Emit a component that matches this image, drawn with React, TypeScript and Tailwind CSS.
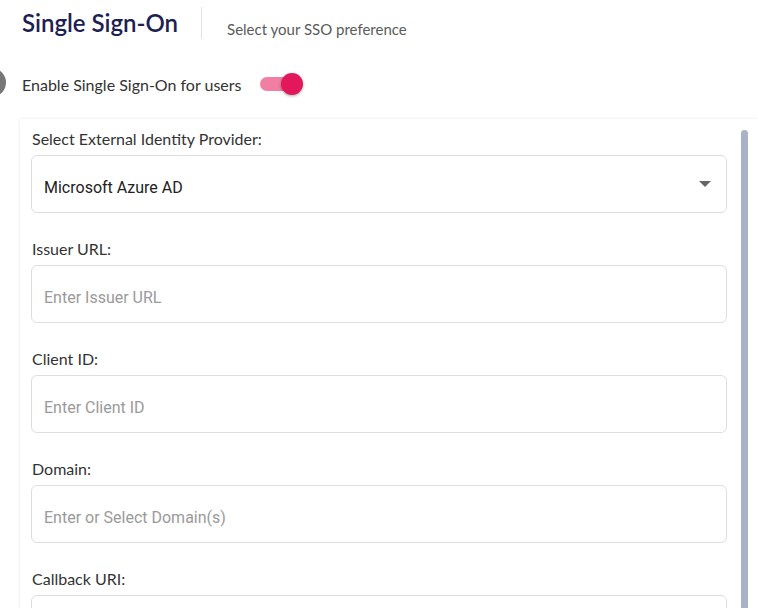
import React from "react";

const Field = ({ label, placeholder, value, select }: { label: string; placeholder?: string; value?: string; select?: boolean }) => (
  <div className="flex flex-col">
    <div className="h-[20px] leading-[20px] text-[16px] text-[#333] font-['Lato',sans-serif] pl-px">{label}</div>
    <div className="mt-[6px] h-[58px] border border-[#dedede] rounded-[6px] flex items-center pl-[12px] pr-[15px] bg-white">
      <span
        className={
          "flex-1 pt-[8px] text-[16px] font-['Roboto',sans-serif] " + (value ? "text-[#222]" : "text-[#9a9a9a]")
        }
      >
        {value ?? placeholder}
      </span>
      {select && (
        <svg width="12" height="6" viewBox="0 0 12 6" className="mt-[-1px]">
          <path d="M0 0h12L6 6z" fill="#666" />
        </svg>
      )}
    </div>
  </div>
);

export default function App() {
  return (
    <div className="w-[758px] h-[608px] overflow-hidden bg-white relative font-['Lato',sans-serif]">
      <div className="flex items-start pl-[22px] pt-[7px]">
        <div className="text-[24px] leading-[32px] font-semibold text-[#1c2152] pt-[0px]">Single Sign-On</div>
        <div className="w-px h-[32px] bg-[#e2e2e2] ml-[23px]" />
        <div className="ml-[25px] pt-[12px] text-[15px] leading-[20px] text-[#5b5b5b]">Select your SSO preference</div>
      </div>
      <div className="relative flex items-center h-[28px] mt-[31px] pl-[22px]">
        <div className="absolute left-[-23px] top-[-2px] w-[29px] h-[29px] rounded-full bg-[#777]" />
        <span className="text-[16px] text-[#333] pt-[2px]">Enable Single Sign-On for users</span>
        <div className="relative ml-[18px] w-[38px] h-[14px] rounded-full bg-[#f07fa3]">
          <div className="absolute right-[-5px] top-[-4px] w-[22px] h-[22px] rounded-full bg-[#e3185c] shadow-[0_1px_3px_rgba(0,0,0,0.35)]" />
        </div>
      </div>
      <div className="ml-[20px] mt-[21px] h-[500px] flex bg-white shadow-[0_0_3px_rgba(0,0,0,0.12)] rounded-tl-[2px]">
        <div className="flex-1 flex flex-col gap-[26px] pt-[10px] pl-[11px] pr-[14px]">
          <Field label="Select External Identity Provider:" value="Microsoft Azure AD" select />
          <Field label="Issuer URL:" placeholder="Enter Issuer URL" />
          <Field label="Client ID:" placeholder="Enter Client ID" />
          <Field label="Domain:" placeholder="Enter or Select Domain(s)" />
          <Field label="Callback URI:" placeholder="" />
        </div>
        <div className="w-[7px] mt-[11px] mr-[10px] rounded-t-full bg-[#aab1c8]" />
      </div>
    </div>
  );
}
